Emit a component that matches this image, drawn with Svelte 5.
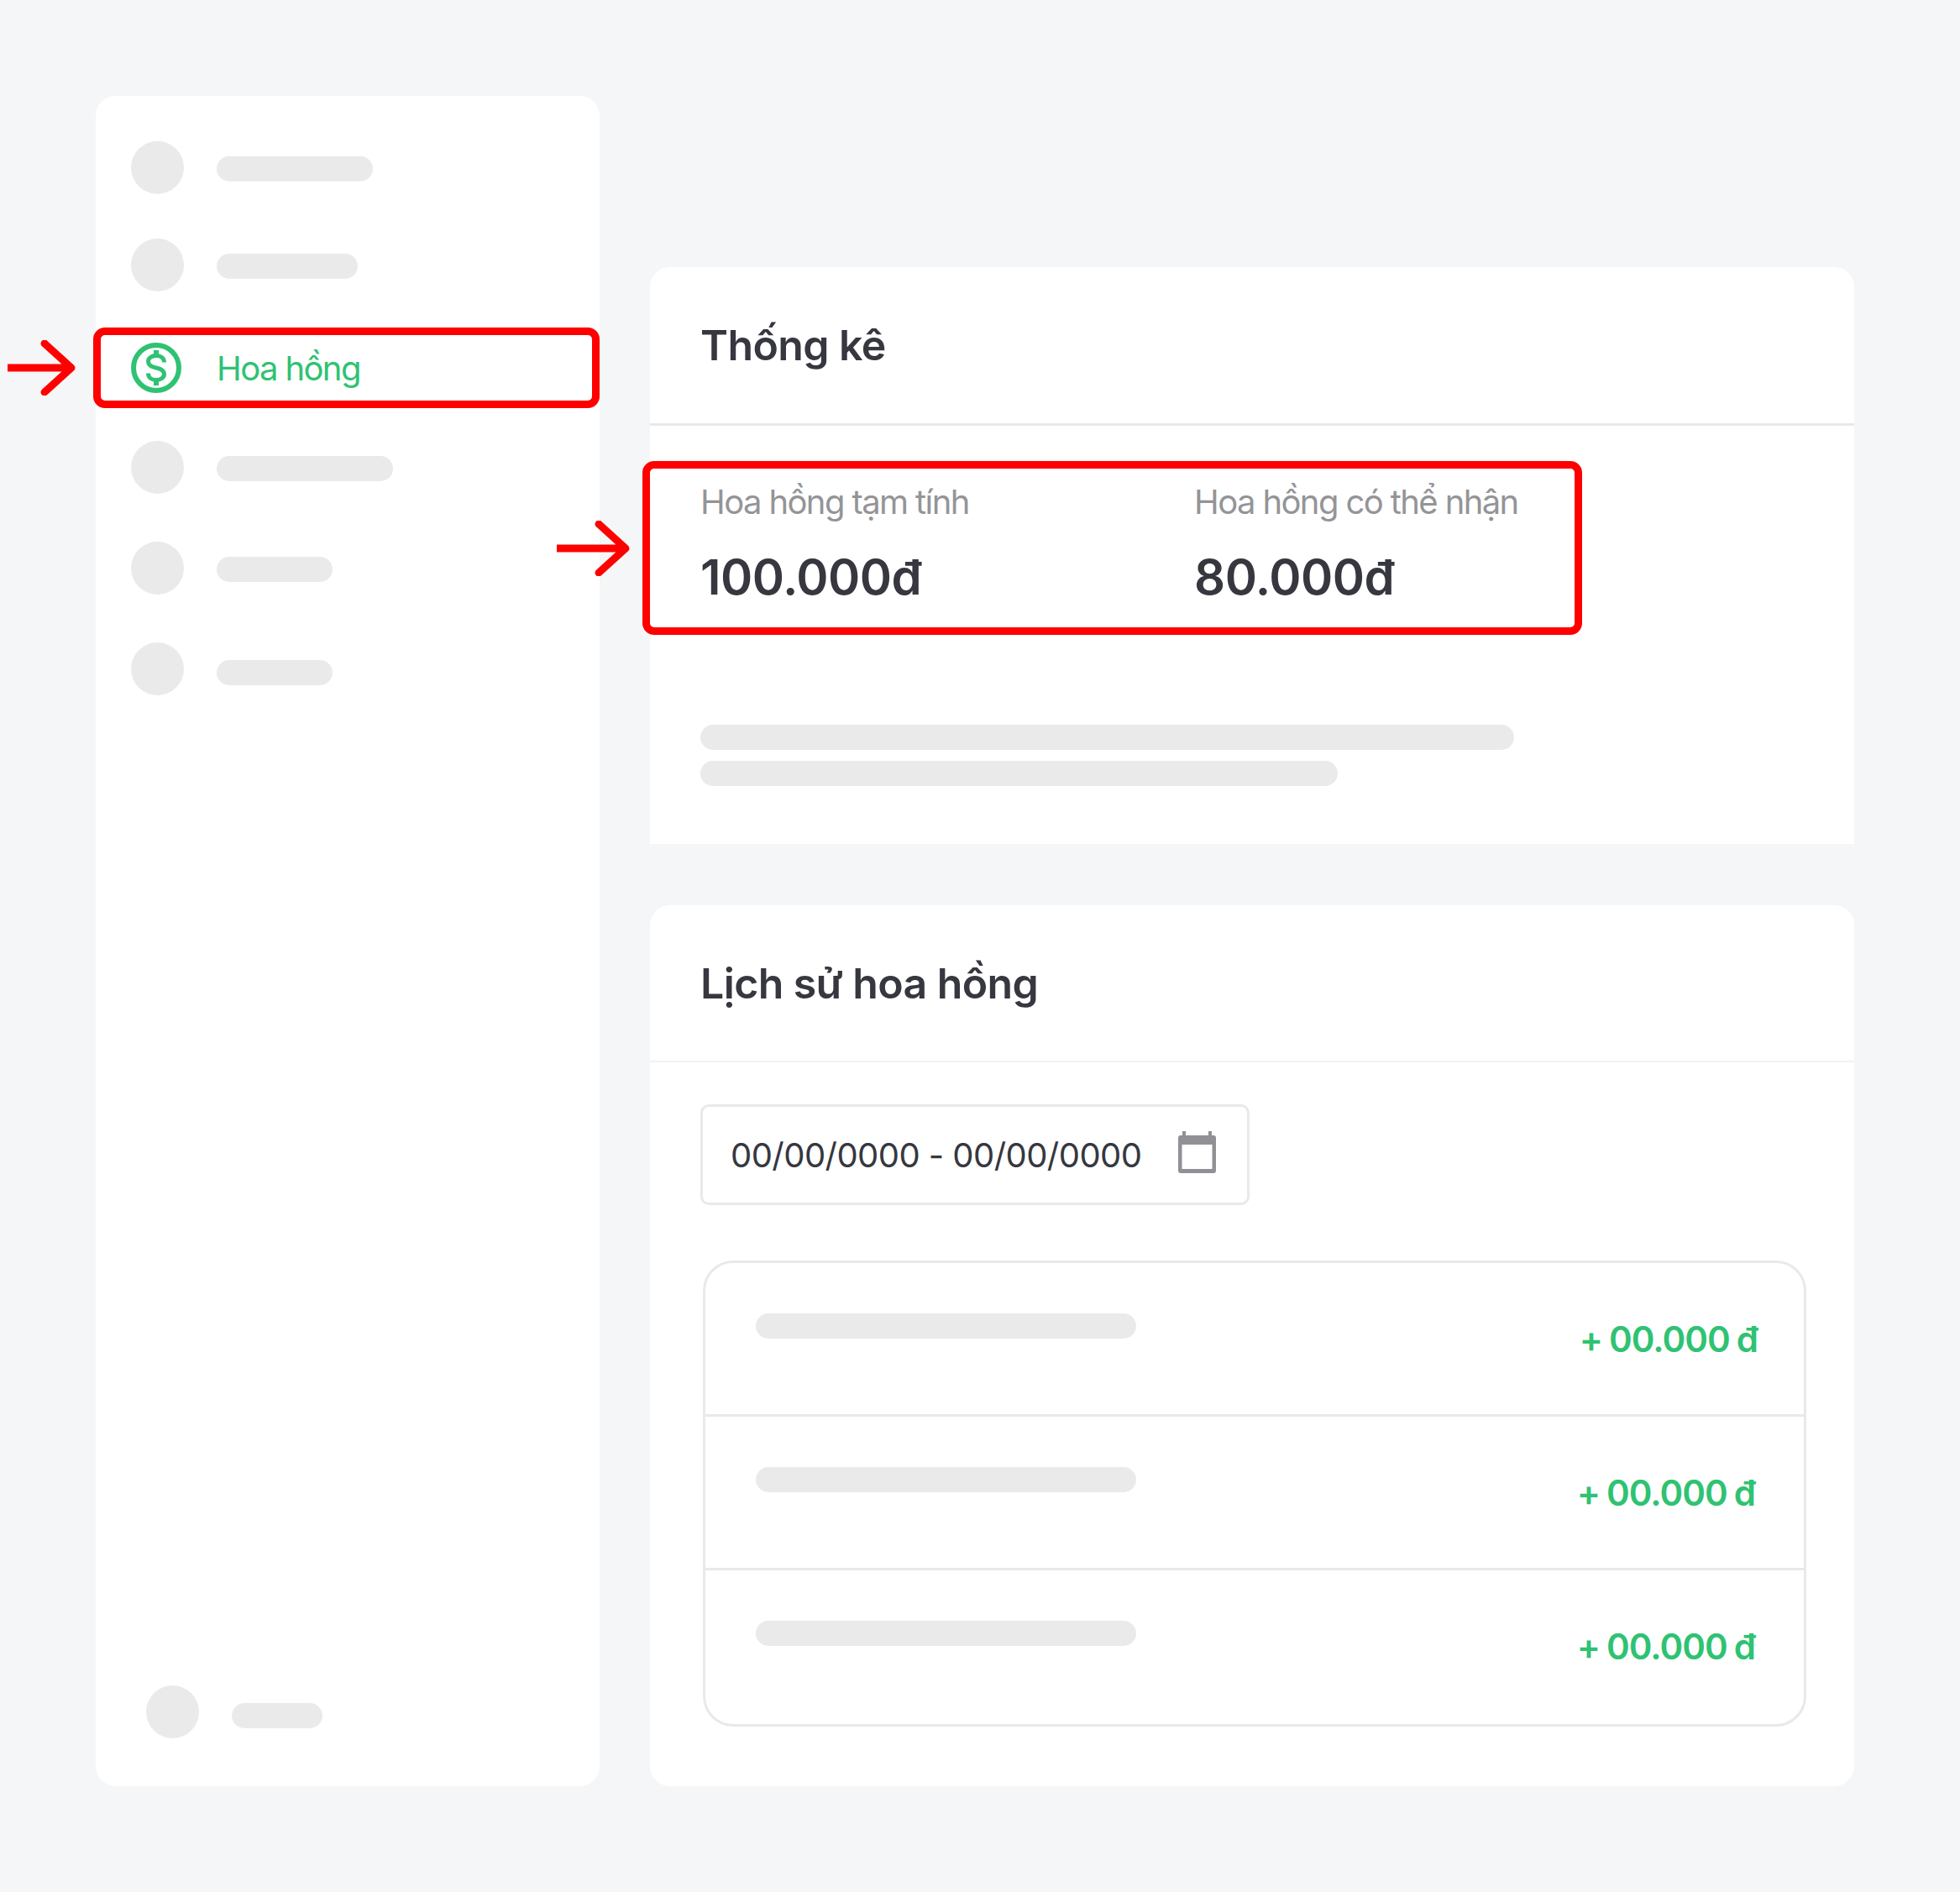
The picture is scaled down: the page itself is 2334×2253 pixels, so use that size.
<script lang="ts">
  // sidebar placeholders: bar width, space above the row, how far the bar sits below centre
  const navTop = [
    { bar: 186, gap: 0, drop: 3 },
    { bar: 168, gap: 53, drop: 3 },
  ];
  const navBottom = [
    { bar: 210, gap: 39, drop: 3 },
    { bar: 138, gap: 57, drop: 2 },
    { bar: 138, gap: 57, drop: 9 },
  ];
  const history = ['+ 00.000 đ', '+ 00.000 đ', '+ 00.000 đ'];
</script>

{#snippet arrow(len: number)}
  <svg class="arrow" viewBox="0 0 {len + 8} 66" width={len + 8} height="66" aria-hidden="true">
    <path d="M0 33H{len}M{len - 30} 4L{len + 2} 33L{len - 30} 62" fill="none" stroke="#ff0000" stroke-width="9" stroke-linecap="round" stroke-linejoin="round" />
  </svg>
{/snippet}

<div class="page">
  <aside class="sidebar">
    {#each navTop as item}
      <div class="nav-row" style="margin-top:{item.gap}px">
        <span class="dot"></span>
        <span class="bar" style="width:{item.bar}px;margin-top:{item.drop}px"></span>
      </div>
    {/each}

    <div class="nav-active">
      {@render arrow(74)}
      <svg class="money" viewBox="0 0 60 60" width="60" height="60" aria-hidden="true">
        <circle cx="30" cy="30" r="27" fill="none" stroke="#2fc272" stroke-width="6" />
        <path d="M39.5 23.5C39.500 18.500 35.500 15.500 30 15.500C24.500 15.500 20.500 18.500 20.500 22.500C20.500 27 25 29 30 30C35 31 39.500 33 39.500 37.500C39.500 41.500 35.500 44.500 30 44.500C24.500 44.500 20.500 41.500 20.500 36.500" fill="none" stroke="#2fc272" stroke-width="5" />
        <path d="M30 9V15M30 45V51" fill="none" stroke="#2fc272" stroke-width="6" />
      </svg>
      <span class="nav-label">Hoa hồng</span>
    </div>

    {#each navBottom as item}
      <div class="nav-row" style="margin-top:{item.gap}px">
        <span class="dot"></span>
        <span class="bar" style="width:{item.bar}px;margin-top:{item.drop}px"></span>
      </div>
    {/each}

    <div class="nav-row nav-foot">
      <span class="dot"></span>
      <span class="bar" style="width:108px;margin-top:9px"></span>
    </div>
  </aside>

  <main class="content">
    <section class="card stats">
      <h2 class="card-title">Thống kê</h2>
      <div class="stats-body">
        <div class="stats-box">
          {@render arrow(80)}
          <div class="stat">
            <span class="stat-label">Hoa hồng tạm tính</span>
            <span class="stat-value">100.000đ</span>
          </div>
          <div class="stat">
            <span class="stat-label">Hoa hồng có thể nhận</span>
            <span class="stat-value">80.000đ</span>
          </div>
        </div>
        <div class="bar long"></div>
        <div class="bar medium"></div>
      </div>
    </section>

    <section class="card history">
      <h2 class="card-title light">Lịch sử hoa hồng</h2>
      <div class="history-body">
        <div class="date-input">
          <span>00/00/0000 - 00/00/0000</span>
          <svg class="calendar" viewBox="0 0 45 50" width="45" height="50" aria-hidden="true">
            <path d="M5 0h4v6H5zM36 0h4v6h-4z" fill="#919195" />
            <path d="M3 5h39a3 3 0 0 1 3 3v39a3 3 0 0 1-3 3H3a3 3 0 0 1-3-3V8a3 3 0 0 1 3-3zM4.500 16v29h36V16z" fill="#919195" fill-rule="evenodd" />
          </svg>
        </div>
        <div class="history-list">
          {#each history as amount}
            <div class="history-row">
              <div class="bar row-bar"></div>
              <span class="amount">{amount}</span>
            </div>
          {/each}
        </div>
      </div>
    </section>
  </main>
</div>

<style>
  :global(body) {
    margin: 0;
    background: #f5f6f8;
  }

  .page {
    display: flex;
    gap: 60px;
    box-sizing: border-box;
    width: 2334px;
    height: 2253px;
    padding: 114px 0 0 114px;
    font-family: Inter, "Liberation Sans", sans-serif;
    color: #36373f;
    background: #f5f6f8;
  }

  .sidebar {
    display: flex;
    flex-direction: column;
    box-sizing: border-box;
    width: 600px;
    height: 2013px;
    padding: 54px 0 57px 42px;
    background: #fff;
    border-radius: 24px;
  }

  .nav-row {
    display: flex;
    align-items: center;
    gap: 39px;
    height: 63px;
  }

  .nav-foot {
    margin-top: auto;
    margin-left: 18px;
  }

  .dot {
    flex: none;
    width: 63px;
    height: 63px;
    border-radius: 50%;
    background: #eaeaea;
  }

  .bar {
    display: block;
    height: 30px;
    border-radius: 15px;
    background: #eaeaea;
  }

  .nav-active {
    position: relative;
    display: flex;
    align-items: center;
    gap: 42px;
    box-sizing: border-box;
    width: 603px;
    height: 96px;
    margin: 43px 0 0 -45px;
    padding-left: 36px;
    border: 9px solid #ff0000;
    border-radius: 14px;
  }

  .arrow {
    position: absolute;
    top: 50%;
    margin-top: -33px;
  }

  .nav-active .arrow {
    left: -111px;
  }

  .nav-label {
    font-size: 40px;
    color: #2fc272;
    letter-spacing: -1.6px;
  }

  .content {
    display: flex;
    flex-direction: column;
    gap: 73px;
    width: 1434px;
    margin-top: 204px;
  }

  .card {
    background: #fff;
    border-radius: 24px;
  }

  .stats {
    height: 687px;
    border-radius: 24px 24px 0 0;
  }

  .history {
    height: 1049px;
  }

  .card-title {
    box-sizing: border-box;
    height: 189px;
    margin: 0;
    padding: 0 60px;
    font-size: 50px;
    font-weight: 600;
    line-height: 186px;
    letter-spacing: -0.6px;
    border-bottom: 3px solid #e8e9eb;
  }

  .card-title.light {
    height: 187px;
    border-bottom: 2px solid #f1f2f3;
  }

  .stats-body {
    padding: 42px 0 0 60px;
  }

  .stats-box {
    position: relative;
    display: flex;
    box-sizing: border-box;
    width: 1119px;
    height: 207px;
    margin: 0 0 107px -69px;
    padding: 16px 0 0 60px;
    border: 9px solid #ff0000;
    border-radius: 14px;
  }

  .stats-box .arrow {
    left: -111px;
  }

  .stat {
    display: flex;
    flex: none;
    flex-direction: column;
    width: 588px;
  }

  .stat-label {
    font-size: 40px;
    line-height: 48px;
    color: #949497;
    letter-spacing: -1.6px;
  }

  .stat-value {
    margin-top: 30px;
    font-size: 58px;
    font-weight: 600;
    line-height: 70px;
    letter-spacing: -0.5px;
  }

  .long {
    width: 969px;
  }

  .medium {
    width: 759px;
    margin-top: 13px;
  }

  .history-body {
    padding: 50px 0 0 60px;
  }

  .date-input {
    display: flex;
    align-items: center;
    justify-content: space-between;
    box-sizing: border-box;
    width: 654px;
    height: 120px;
    padding: 0 37px 0 33px;
    font-size: 40px;
    letter-spacing: -0.56px;
    border: 3px solid #e8e9eb;
    border-radius: 10px;
  }

  .calendar {
    margin-top: -6px;
  }

  .history-list {
    box-sizing: border-box;
    width: 1314px;
    height: 555px;
    margin: 66px 0 0 3px;
    border: 3px solid #e8e9eb;
    border-radius: 36px;
  }

  .history-row {
    display: flex;
    justify-content: space-between;
    box-sizing: border-box;
    height: 183px;
    padding: 60px 58px 0 60px;
    border-bottom: 3px solid #e8e9eb;
  }

  .history-row:first-child {
    padding-right: 55px;
  }

  .history-row:last-child {
    border-bottom: none;
  }

  .row-bar {
    width: 453px;
  }

  .amount {
    margin-top: 6px;
    font-size: 42px;
    font-weight: 600;
    line-height: 50px;
    letter-spacing: -1px;
    word-spacing: -1.5px;
    color: #2fc272;
  }
</style>
